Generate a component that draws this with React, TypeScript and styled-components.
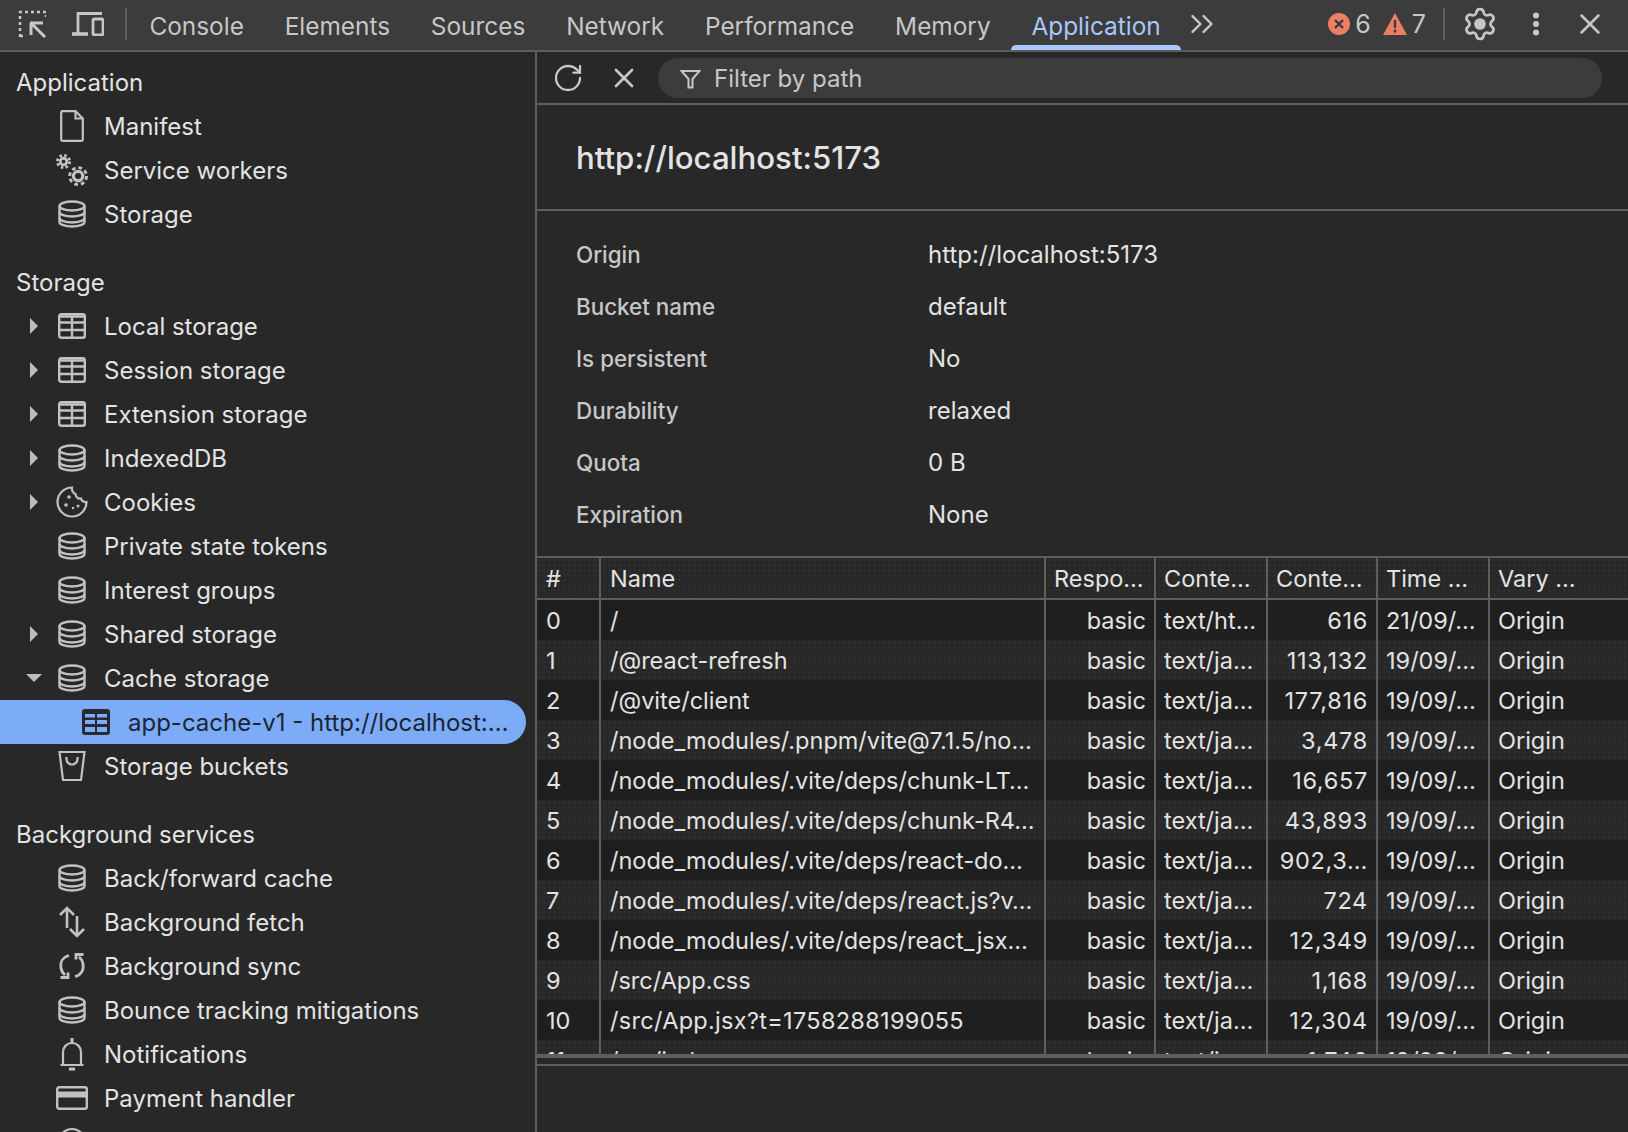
import styled, { createGlobalStyle } from "styled-components";
import { RotateCw, X, Settings, ChevronsRight } from "lucide-react";

const GlobalStyle = createGlobalStyle`
  html, body {
    margin: 0;
    height: 100%;
    background: #282828;
    overflow: hidden;
  }
  * { box-sizing: border-box; }
  body {
    font-family: Inter, "Liberation Sans", sans-serif;
    color: #e3e3e3;
  }
`;

const Page = styled.div`
  display: flex;
  flex-direction: column;
  width: 1628px;
  height: 1132px;
  overflow: hidden;
`;

/* top toolbar */
const TopBar = styled.div`
  display: flex;
  align-items: center;
  flex: none;
  height: 52px;
  padding-bottom: 2px;
  background: #3c3c3c;
  border-bottom: 2px solid #5e5e5e;
`;

const TopIcon = styled.span<{ $w: number }>`
  display: flex;
  align-items: center;
  justify-content: center;
  flex: none;
  width: ${(p) => p.$w}px;
  color: #c7c7c7;
`;

const VDivider = styled.span<{ $ml: number; $mr: number }>`
  flex: none;
  width: 2px;
  height: 32px;
  margin: 0 ${(p) => p.$mr}px 0 ${(p) => p.$ml}px;
  background: #5e5e5e;
`;

const Tab = styled.div<{ $active?: boolean }>`
  position: relative;
  align-self: stretch;
  flex: none;
  padding: 4px 20.4px 0;
  font-size: 24.4px;
  line-height: 44px;
  color: ${(p) => (p.$active ? "#a8c7fa" : "#c7c7c7")};
  ${(p) =>
    p.$active &&
    `
    &::after {
      content: "";
      position: absolute;
      left: 0;
      right: 0;
      bottom: -2px;
      height: 5px;
      background: #a8c7fa;
      border-radius: 5px 5px 0 0;
    }
  `}
`;

const StatusGroup = styled.div`
  display: flex;
  align-items: center;
  margin-left: auto;
  padding-right: 18px;
`;

const Counter = styled.span`
  display: flex;
  align-items: center;
  gap: 5px;
  margin-right: 12px;
  font-size: 25px;
  color: #c7c7c7;
  &:nth-child(2) { margin-right: 0; }
`;

/* body */
const Body = styled.div`
  display: flex;
  flex: 1;
  min-height: 0;
`;

const Sidebar = styled.nav`
  flex: none;
  width: 537px;
  padding-top: 8px;
  border-right: 2px solid #5e5e5e;
  overflow: hidden;
`;

const SectionTitle = styled.div<{ $first?: boolean }>`
  height: 44px;
  margin-top: ${(p) => (p.$first ? 0 : 24)}px;
  padding-left: 16px;
  font-size: 24px;
  line-height: 46px;
`;

const TreeRow = styled.div<{ $selected?: boolean; $child?: boolean }>`
  display: flex;
  align-items: center;
  width: 526px;
  height: 44px;
  padding-left: ${(p) => (p.$child ? 80 : 26)}px;
  font-size: 24px;
  white-space: nowrap;
  color: ${(p) => (p.$selected ? "#1c2533" : "#e3e3e3")};
  background: ${(p) => (p.$selected ? "#7cacf8" : "transparent")};
  border-radius: ${(p) => (p.$selected ? "0 22px 22px 0" : "0")};
`;

const ArrowSlot = styled.span`
  display: flex;
  justify-content: center;
  flex: none;
  width: 16px;
`;

const RightArrow = styled.span`
  width: 0;
  height: 0;
  border-left: 8px solid #bdbdbd;
  border-top: 8px solid transparent;
  border-bottom: 8px solid transparent;
`;

const DownArrow = styled.span`
  width: 0;
  height: 0;
  border-top: 8px solid #bdbdbd;
  border-left: 8px solid transparent;
  border-right: 8px solid transparent;
`;

const TreeIcon = styled.span`
  display: flex;
  align-items: center;
  justify-content: center;
  flex: none;
  width: 32px;
  height: 34px;
  margin: 0 16px 0 14px;
  color: #c2c2c2;
`;

const ChildIcon = styled(TreeIcon)`
  margin: 0 16px 0 0;
`;

const Main = styled.main`
  display: flex;
  flex-direction: column;
  flex: 1;
  min-width: 0;
`;

const FilterBar = styled.div`
  display: flex;
  align-items: center;
  flex: none;
  height: 53px;
  padding: 0 26px 0 0;
  border-bottom: 2px solid #5e5e5e;
`;

const BarIcon = styled.span<{ $w: number }>`
  display: flex;
  justify-content: center;
  flex: none;
  width: ${(p) => p.$w}px;
  color: #c7c7c7;
`;

const FilterPill = styled.div`
  display: flex;
  align-items: center;
  flex: 1;
  gap: 13px;
  height: 40px;
  margin-left: 9px;
  padding: 2px 0 0 22px;
  font-size: 24px;
  color: #c7c7c7;
  background: #3c3c3c;
  border-radius: 20px;
`;

const TitleBlock = styled.div`
  display: flex;
  align-items: center;
  flex: none;
  height: 106px;
  padding: 2px 0 0 39px;
  font-size: 31.2px;
  font-weight: 500;
  border-bottom: 2px solid #5e5e5e;
`;

const Details = styled.div`
  flex: none;
  padding: 17px 0 16px 39px;
`;

const DetailRow = styled.div`
  display: flex;
  align-items: center;
  height: 52px;
`;

const DetailLabel = styled.span`
  flex: none;
  width: 352px;
  font-size: 22.4px;
  font-weight: 500;
  color: #c7c7c7;
`;

const DetailValue = styled.span`
  font-size: 24px;
`;

const Table = styled.div`
  flex: none;
  border-top: 2px solid #5e5e5e;
  border-bottom: 4px solid #5e5e5e;
`;

const TableRows = styled.div`
  height: 454px;
  overflow: hidden;
`;

const GridRow = styled.div<{ $head?: boolean; $odd?: boolean }>`
  display: grid;
  grid-template-columns: 64px 445px 110px 112px 110px 112px 1fr;
  height: ${(p) => (p.$head ? 42 : 40)}px;
  background-color: ${(p) => (p.$odd ? "#1f1f1f" : "#282828")};
  ${(p) =>
    !p.$odd &&
    `
    background-image: radial-gradient(circle, #2f2f2f 1px, transparent 1.2px);
    background-size: 5px 5px;
  `}
  ${(p) => p.$head && "border-bottom: 2px solid #5e5e5e;"}
`;

const Cell = styled.div<{ $right?: boolean; $spaced?: number }>`
  padding: 0 ${(p) => (p.$right ? 8 : 6)}px 0 9px;
  font-size: 23.5px;
  line-height: 41px;
  letter-spacing: ${(p) => p.$spaced ?? 0}px;
  white-space: nowrap;
  overflow: hidden;
  text-align: ${(p) => (p.$right ? "right" : "left")};
  border-right: 2px solid #5e5e5e;
  &:nth-child(n + 3) { padding-left: 8px; }
  &:last-child { border-right: 0; }
`;

const Strip = styled.div`
  flex: none;
  height: 8px;
  border-bottom: 2px solid #5e5e5e;
`;

/* icons */
const Db = () => (
  <svg width="28" height="28" viewBox="0 0 28 28" fill="none" stroke="currentColor" strokeWidth="2.4">
    <ellipse cx="14" cy="6" rx="12.5" ry="4.5" />
    <path d="M1.5 6v16c0 2.5 5.6 4.5 12.5 4.5s12.5-2 12.5-4.5V6" />
    <path d="M1.5 12c0 2.5 5.6 4.5 12.5 4.5s12.5-2 12.5-4.5M1.5 18c0 2.5 5.6 4.5 12.5 4.5s12.5-2 12.5-4.5" />
  </svg>
);

const Grid = () => (
  <svg width="28" height="26" viewBox="0 0 28 26" fill="none" stroke="currentColor" strokeWidth="2.4">
    <rect x="1.2" y="1.2" width="25.6" height="23.6" rx="2" />
    <path d="M1 3.5h26M1 9.5h26M1 17h26M14 4v21" />
  </svg>
);

const FileIcon = () => (
  <svg width="24" height="32" viewBox="0 0 24 32" fill="none" stroke="currentColor" strokeWidth="2.2">
    <path d="M2.5 1.2h13L22.8 8.5V29.5a1.3 1.3 0 0 1-1.3 1.3h-19a1.3 1.3 0 0 1-1.3-1.3V2.5a1.3 1.3 0 0 1 1.3-1.3z" />
    <path d="M15.5 1v7.5h7.5" />
  </svg>
);

const Gears = () => (
  <svg width="34" height="34" viewBox="0 0 34 34" fill="none" stroke="currentColor">
    <circle cx="8" cy="8" r="3.5" strokeWidth="3" />
    <circle cx="8" cy="8" r="6.5" strokeWidth="3" strokeDasharray="2.7 2.4" />
    <circle cx="23.5" cy="23.5" r="5" strokeWidth="3.5" />
    <circle cx="23.5" cy="23.5" r="9" strokeWidth="3" strokeDasharray="4 3.07" />
  </svg>
);

const Cookie = () => (
  <svg width="32" height="32" viewBox="0 0 32 32" fill="none" stroke="currentColor" strokeWidth="2.2">
    <path d="M16 1.5a14.5 14.5 0 1 0 14.5 14.5c-2.5.5-5-1-5.5-3.5-3 .5-5.5-1.5-5.5-4.5C17 7.5 15.5 4 16 1.5z" />
    <g fill="currentColor" stroke="none">
      <circle cx="13" cy="11" r="1.8" />
      <circle cx="10" cy="19" r="1.8" />
      <circle cx="17" cy="22" r="1.2" />
      <circle cx="22" cy="20" r="1.5" />
    </g>
  </svg>
);

const Bucket = () => (
  <svg width="28" height="32" viewBox="0 0 28 32" fill="none" stroke="currentColor" strokeWidth="2.2">
    <path d="M1.5 2h25L23 30H5z" />
    <path d="M8.5 7v2a5.5 5.5 0 0 0 11 0V7" />
  </svg>
);

const Updown = () => (
  <svg width="28" height="32" viewBox="0 0 28 32" fill="none" stroke="currentColor" strokeWidth="2.6">
    <path d="M9 22V2M2 9l7-7 7 7M19 10v20M12 23l7 7 7-7" />
  </svg>
);

const Sync = () => (
  <svg width="28" height="28" viewBox="0 0 28 28" fill="none" stroke="currentColor" strokeWidth="2.8">
    <path d="M11 3.5C5 5 2 10 3 16c.5 3 2 5.5 4 7M2.5 25.5H10v-5" />
    <path d="M17 24.5c6-1.5 9-6.5 8-12.5-.5-3-2-5.5-4-7M25.5 2.5H18v5" />
  </svg>
);

const Bell = () => (
  <svg width="26" height="34" viewBox="0 0 26 34" fill="none" stroke="currentColor" strokeWidth="2.2">
    <path d="M1.5 28h23M4 28V15a9 9 0 0 1 18 0v13" />
    <path d="M13 1v5" strokeWidth="3" />
    <path d="M10 32h6" strokeWidth="3" />
  </svg>
);

const Card = () => (
  <svg width="32" height="24" viewBox="0 0 32 24" fill="none" stroke="currentColor" strokeWidth="2.4">
    <rect x="1.2" y="1.2" width="29.6" height="21.6" rx="2" />
    <path d="M1 8.5h30" strokeWidth="6" />
  </svg>
);

const Clock = () => (
  <svg width="30" height="30" viewBox="0 0 30 30" fill="none" stroke="currentColor" strokeWidth="2.2">
    <circle cx="15" cy="15" r="13" />
    <path d="M15 8v8l5 3" />
  </svg>
);

const SelectedGrid = () => (
  <svg width="28" height="26" viewBox="0 0 28 26">
    <rect x="0" y="0" width="28" height="26" rx="3" fill="#262a33" />
    <g fill="#7cacf8">
      <rect x="3" y="5" width="10" height="3.5" />
      <rect x="15" y="5" width="10" height="3.5" />
      <rect x="3" y="11" width="10" height="4" />
      <rect x="15" y="11" width="10" height="4" />
      <rect x="3" y="18" width="10" height="5" />
      <rect x="15" y="18" width="10" height="5" />
    </g>
  </svg>
);

const Inspect = () => (
  <svg width="28" height="28" viewBox="0 0 28 28" fill="none" stroke="currentColor">
    <path d="M2 27V2h26v5" strokeWidth="2.5" strokeDasharray="3 3" />
    <path d="M2 26h6" strokeWidth="2.5" strokeDasharray="3 3" />
    <path d="M12 13h13M13 13v12M14 14l13 13" strokeWidth="3" />
  </svg>
);

const Device = () => (
  <svg width="32" height="24" viewBox="0 0 32 24" fill="none" stroke="currentColor">
    <path d="M6 21V1.5h24" strokeWidth="2.8" />
    <path d="M0 22h16" strokeWidth="3.6" />
    <rect x="21" y="7" width="10" height="16" rx="1.5" strokeWidth="2.8" />
  </svg>
);

const Funnel = () => (
  <svg width="21" height="20" viewBox="0 0 21 20" fill="none" stroke="currentColor" strokeWidth="2">
    <path d="M1.5 2h18l-7 8v8.5h-4V10z" />
  </svg>
);

const ErrorIcon = () => (
  <svg width="22" height="22" viewBox="0 0 22 22">
    <circle cx="11" cy="11" r="11" fill="#ee7d66" />
    <path d="M7 7l8 8M15 7l-8 8" stroke="#3c3c3c" strokeWidth="2.4" />
  </svg>
);

const WarnIcon = () => (
  <svg width="24" height="22" viewBox="0 0 24 22">
    <path d="M12 0l12 22H0z" fill="#ee7d66" />
    <path d="M12 7v8M12 16.5v3" stroke="#3c3c3c" strokeWidth="2.4" />
  </svg>
);

const GearIcon = styled(Settings)`
  circle { fill: currentColor; }
`;

const Dots = () => (
  <svg width="8" height="24" viewBox="0 0 8 24" fill="currentColor">
    <circle cx="4" cy="3.5" r="3" />
    <circle cx="4" cy="12" r="3" />
    <circle cx="4" cy="20.5" r="3" />
  </svg>
);

const tabs = ["Console", "Elements", "Sources", "Network", "Performance", "Memory"];

type Item = { label: string; icon: React.ReactNode; arrow?: "right" | "down" };

const appItems: Item[] = [
  { label: "Manifest", icon: <FileIcon /> },
  { label: "Service workers", icon: <Gears /> },
  { label: "Storage", icon: <Db /> },
];

const storageItems: Item[] = [
  { label: "Local storage", icon: <Grid />, arrow: "right" },
  { label: "Session storage", icon: <Grid />, arrow: "right" },
  { label: "Extension storage", icon: <Grid />, arrow: "right" },
  { label: "IndexedDB", icon: <Db />, arrow: "right" },
  { label: "Cookies", icon: <Cookie />, arrow: "right" },
  { label: "Private state tokens", icon: <Db /> },
  { label: "Interest groups", icon: <Db /> },
  { label: "Shared storage", icon: <Db />, arrow: "right" },
  { label: "Cache storage", icon: <Db />, arrow: "down" },
];

const backgroundItems: Item[] = [
  { label: "Back/forward cache", icon: <Db /> },
  { label: "Background fetch", icon: <Updown /> },
  { label: "Background sync", icon: <Sync /> },
  { label: "Bounce tracking mitigations", icon: <Db /> },
  { label: "Notifications", icon: <Bell /> },
  { label: "Payment handler", icon: <Card /> },
  { label: "Periodic background sync", icon: <Clock /> },
];

const details = [
  ["Origin", "http://localhost:5173"],
  ["Bucket name", "default"],
  ["Is persistent", "No"],
  ["Durability", "relaxed"],
  ["Quota", "0 B"],
  ["Expiration", "None"],
];

const rows = [
  ["0", "/", "text/ht…", "616", "21/09/…"],
  ["1", "/@react-refresh", "text/ja…", "113,132", "19/09/…"],
  ["2", "/@vite/client", "text/ja…", "177,816", "19/09/…"],
  ["3", "/node_modules/.pnpm/vite@7.1.5/no…", "text/ja…", "3,478", "19/09/…"],
  ["4", "/node_modules/.vite/deps/chunk-LT…", "text/ja…", "16,657", "19/09/…"],
  ["5", "/node_modules/.vite/deps/chunk-R4…", "text/ja…", "43,893", "19/09/…"],
  ["6", "/node_modules/.vite/deps/react-do…", "text/ja…", "902,3…", "19/09/…"],
  ["7", "/node_modules/.vite/deps/react.js?v…", "text/ja…", "724", "19/09/…"],
  ["8", "/node_modules/.vite/deps/react_jsx…", "text/ja…", "12,349", "19/09/…"],
  ["9", "/src/App.css", "text/ja…", "1,168", "19/09/…"],
  ["10", "/src/App.jsx?t=1758288199055", "text/ja…", "12,304", "19/09/…"],
  ["11", "/src/index.css", "text/ja…", "1,746", "19/09/…"],
];

function Tree({ items }: { items: Item[] }) {
  return (
    <>
      {items.map((item) => (
        <TreeRow key={item.label}>
          <ArrowSlot>
            {item.arrow === "right" && <RightArrow />}
            {item.arrow === "down" && <DownArrow />}
          </ArrowSlot>
          <TreeIcon>{item.icon}</TreeIcon>
          {item.label}
        </TreeRow>
      ))}
    </>
  );
}

export default function App() {
  return (
    <Page>
      <GlobalStyle />
      <TopBar>
        <TopIcon $w={64}><Inspect /></TopIcon>
        <TopIcon $w={48}><Device /></TopIcon>
        <VDivider $ml={13} $mr={2} />
        {tabs.map((t) => (
          <Tab key={t}>{t}</Tab>
        ))}
        <Tab $active>Application</Tab>
        <TopIcon $w={42}><ChevronsRight size={38} strokeWidth={1.5} /></TopIcon>
        <StatusGroup>
          <Counter><ErrorIcon />6</Counter>
          <Counter><WarnIcon />7</Counter>
          <VDivider $ml={17} $mr={13} />
          <TopIcon $w={44}><GearIcon size={36} strokeWidth={1.8} /></TopIcon>
          <TopIcon $w={68}><Dots /></TopIcon>
          <TopIcon $w={40}><X size={34} strokeWidth={1.8} /></TopIcon>
        </StatusGroup>
      </TopBar>
      <Body>
        <Sidebar>
          <SectionTitle $first>Application</SectionTitle>
          <Tree items={appItems} />
          <SectionTitle>Storage</SectionTitle>
          <Tree items={storageItems} />
          <TreeRow $selected $child>
            <ChildIcon><SelectedGrid /></ChildIcon>
            app-cache-v1 - http://localhost:…
          </TreeRow>
          <Tree items={[{ label: "Storage buckets", icon: <Bucket /> }]} />
          <SectionTitle>Background services</SectionTitle>
          <Tree items={backgroundItems} />
        </Sidebar>
        <Main>
          <FilterBar>
            <BarIcon $w={62}><RotateCw size={32} strokeWidth={1.7} /></BarIcon>
            <BarIcon $w={50}><X size={32} strokeWidth={2} /></BarIcon>
            <FilterPill>
              <Funnel />
              Filter by path
            </FilterPill>
          </FilterBar>
          <TitleBlock>http://localhost:5173</TitleBlock>
          <Details>
            {details.map(([k, v]) => (
              <DetailRow key={k}>
                <DetailLabel>{k}</DetailLabel>
                <DetailValue>{v}</DetailValue>
              </DetailRow>
            ))}
          </Details>
          <Table>
            <GridRow $head>
              <Cell>#</Cell>
              <Cell>Name</Cell>
              <Cell>Respo…</Cell>
              <Cell>Conte…</Cell>
              <Cell>Conte…</Cell>
              <Cell>Time …</Cell>
              <Cell>Vary …</Cell>
            </GridRow>
            <TableRows>
              {rows.map((r, i) => (
                <GridRow key={r[0]} $odd={i % 2 === 0}>
                  <Cell>{r[0]}</Cell>
                  <Cell $spaced={/\d{5}/.test(r[1]) ? 0.3 : 0}>{r[1]}</Cell>
                  <Cell $right>basic</Cell>
                  <Cell>{r[2]}</Cell>
                  <Cell $right $spaced={0.7}>{r[3]}</Cell>
                  <Cell>{r[4]}</Cell>
                  <Cell>Origin</Cell>
                </GridRow>
              ))}
            </TableRows>
          </Table>
          <Strip />
        </Main>
      </Body>
    </Page>
  );
}
